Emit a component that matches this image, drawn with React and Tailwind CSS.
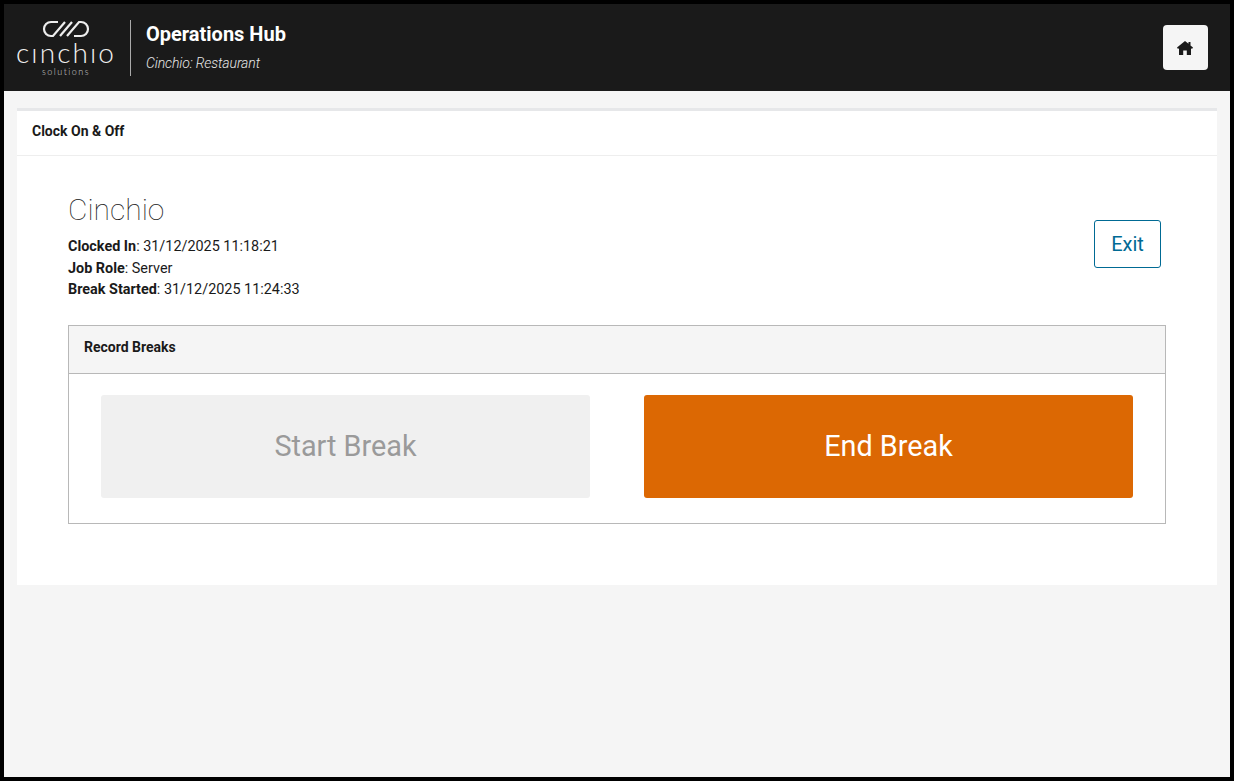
const CinchioLogo = () => {
  return (
    <div className="flex w-[96px] flex-col items-center">
      <svg width="50" height="18" viewBox="0 0 50 18" fill="none" stroke="#ededed" strokeWidth="2.2">
        <path d="M17 2H10a7 7 0 0 0 0 14h2L24 2" />
        <path d="M19 16L31 2" />
        <path d="M26 16L38 2h2a7 7 0 0 1 0 14h-7" />
      </svg>
      <span className="mt-[4px] font-['Lato',sans-serif] text-[28px] leading-[20px] font-light tracking-[2.1px] text-[#f0f0f0]">
        cınchıo
      </span>
      <span className="mt-[5px] font-['Lato',sans-serif] text-[9px] leading-[9px] font-light tracking-[1.5px] text-[#d0d0d0]">
        solutions
      </span>
    </div>
  );
};

const HomeIcon = () => {
  return (
    <svg width="16" height="14" viewBox="0 0 16 14" fill="currentColor" className="mr-[1px]">
      <path d="M8 0L11.5 2.8V1H13.5V4.4L16 6.5 15 8 14 7.2V14H9.8V9.5H6.2V14H2V7.2L1 8 0 6.5Z" />
    </svg>
  );
};

const App = () => {
  return (
    <div className="flex h-[781px] flex-col border-4 border-black bg-[#f5f5f5] font-['Roboto',sans-serif] text-[#1a1a1a]">
      <header className="flex h-[87px] shrink-0 items-center bg-[#1a1a1a] pr-[22px] pl-[14px]">
        <CinchioLogo />
        <div className="mr-[15px] ml-[16px] h-[56px] w-px bg-[#aaaaaa]" />
        <div className="flex flex-col">
          <span className="text-[20px] leading-[28px] font-bold text-white">Operations Hub</span>
          <span className="mt-[3px] text-[14px] leading-[24px] font-light tracking-[-0.1px] text-[#e8e8e8] italic">Cinchio: Restaurant</span>
        </div>
        <button className="ml-auto flex h-[45px] w-[45px] items-center justify-center rounded-[4px] bg-[#f5f5f5] text-[#1a1a1a]">
          <HomeIcon />
        </button>
      </header>

      <main className="px-[13px] pt-[17px]">
        <section className="h-[477px] border-t-[3px] border-[#e6e7e9] bg-white">
          <div className="flex h-[45px] items-center border-b border-[#eeeeee] px-[15px] pb-[4px] text-[14px] font-bold">
            Clock On &amp; Off
          </div>
          <div className="px-[51px] pt-[36px]">
            <div className="flex items-start justify-between pr-[5px]">
              <div>
                <h1 className="text-[30px] leading-[36px] font-thin text-[#1a1a1a]">Cinchio</h1>
                <p className="mt-[8px] text-[14.4px] leading-[21.5px]">
                  <b>Clocked In</b>: 31/12/2025 11:18:21
                </p>
                <p className="text-[14.4px] leading-[21.5px]">
                  <b>Job Role</b>: Server
                </p>
                <p className="text-[14.4px] leading-[21.5px]">
                  <b>Break Started</b>: 31/12/2025 11:24:33
                </p>
              </div>
              <button className="mt-[28px] h-[48px] w-[67px] rounded-[3px] border border-[#006a94] text-[20px] text-[#006a94]">
                Exit
              </button>
            </div>

            <div className="mt-[24px] border border-[#b8b8b8]">
              <div className="flex h-[48px] items-center border-b border-[#b8b8b8] bg-[#f5f5f5] px-[15px] pb-[3px] text-[14px] font-bold">
                Record Breaks
              </div>
              <div className="grid grid-cols-2 gap-[54px] px-[32px] pt-[21px] pb-[25px]">
                <button className="h-[103px] rounded-[3px] bg-[#f0f0f0] pt-[1px] text-[28.8px] text-[#9a9a9a]">Start Break</button>
                <button className="h-[103px] rounded-[3px] bg-[#dc6803] pt-[1px] text-[28.8px] text-white">End Break</button>
              </div>
            </div>
          </div>
        </section>
      </main>
    </div>
  );
};

export default App;
